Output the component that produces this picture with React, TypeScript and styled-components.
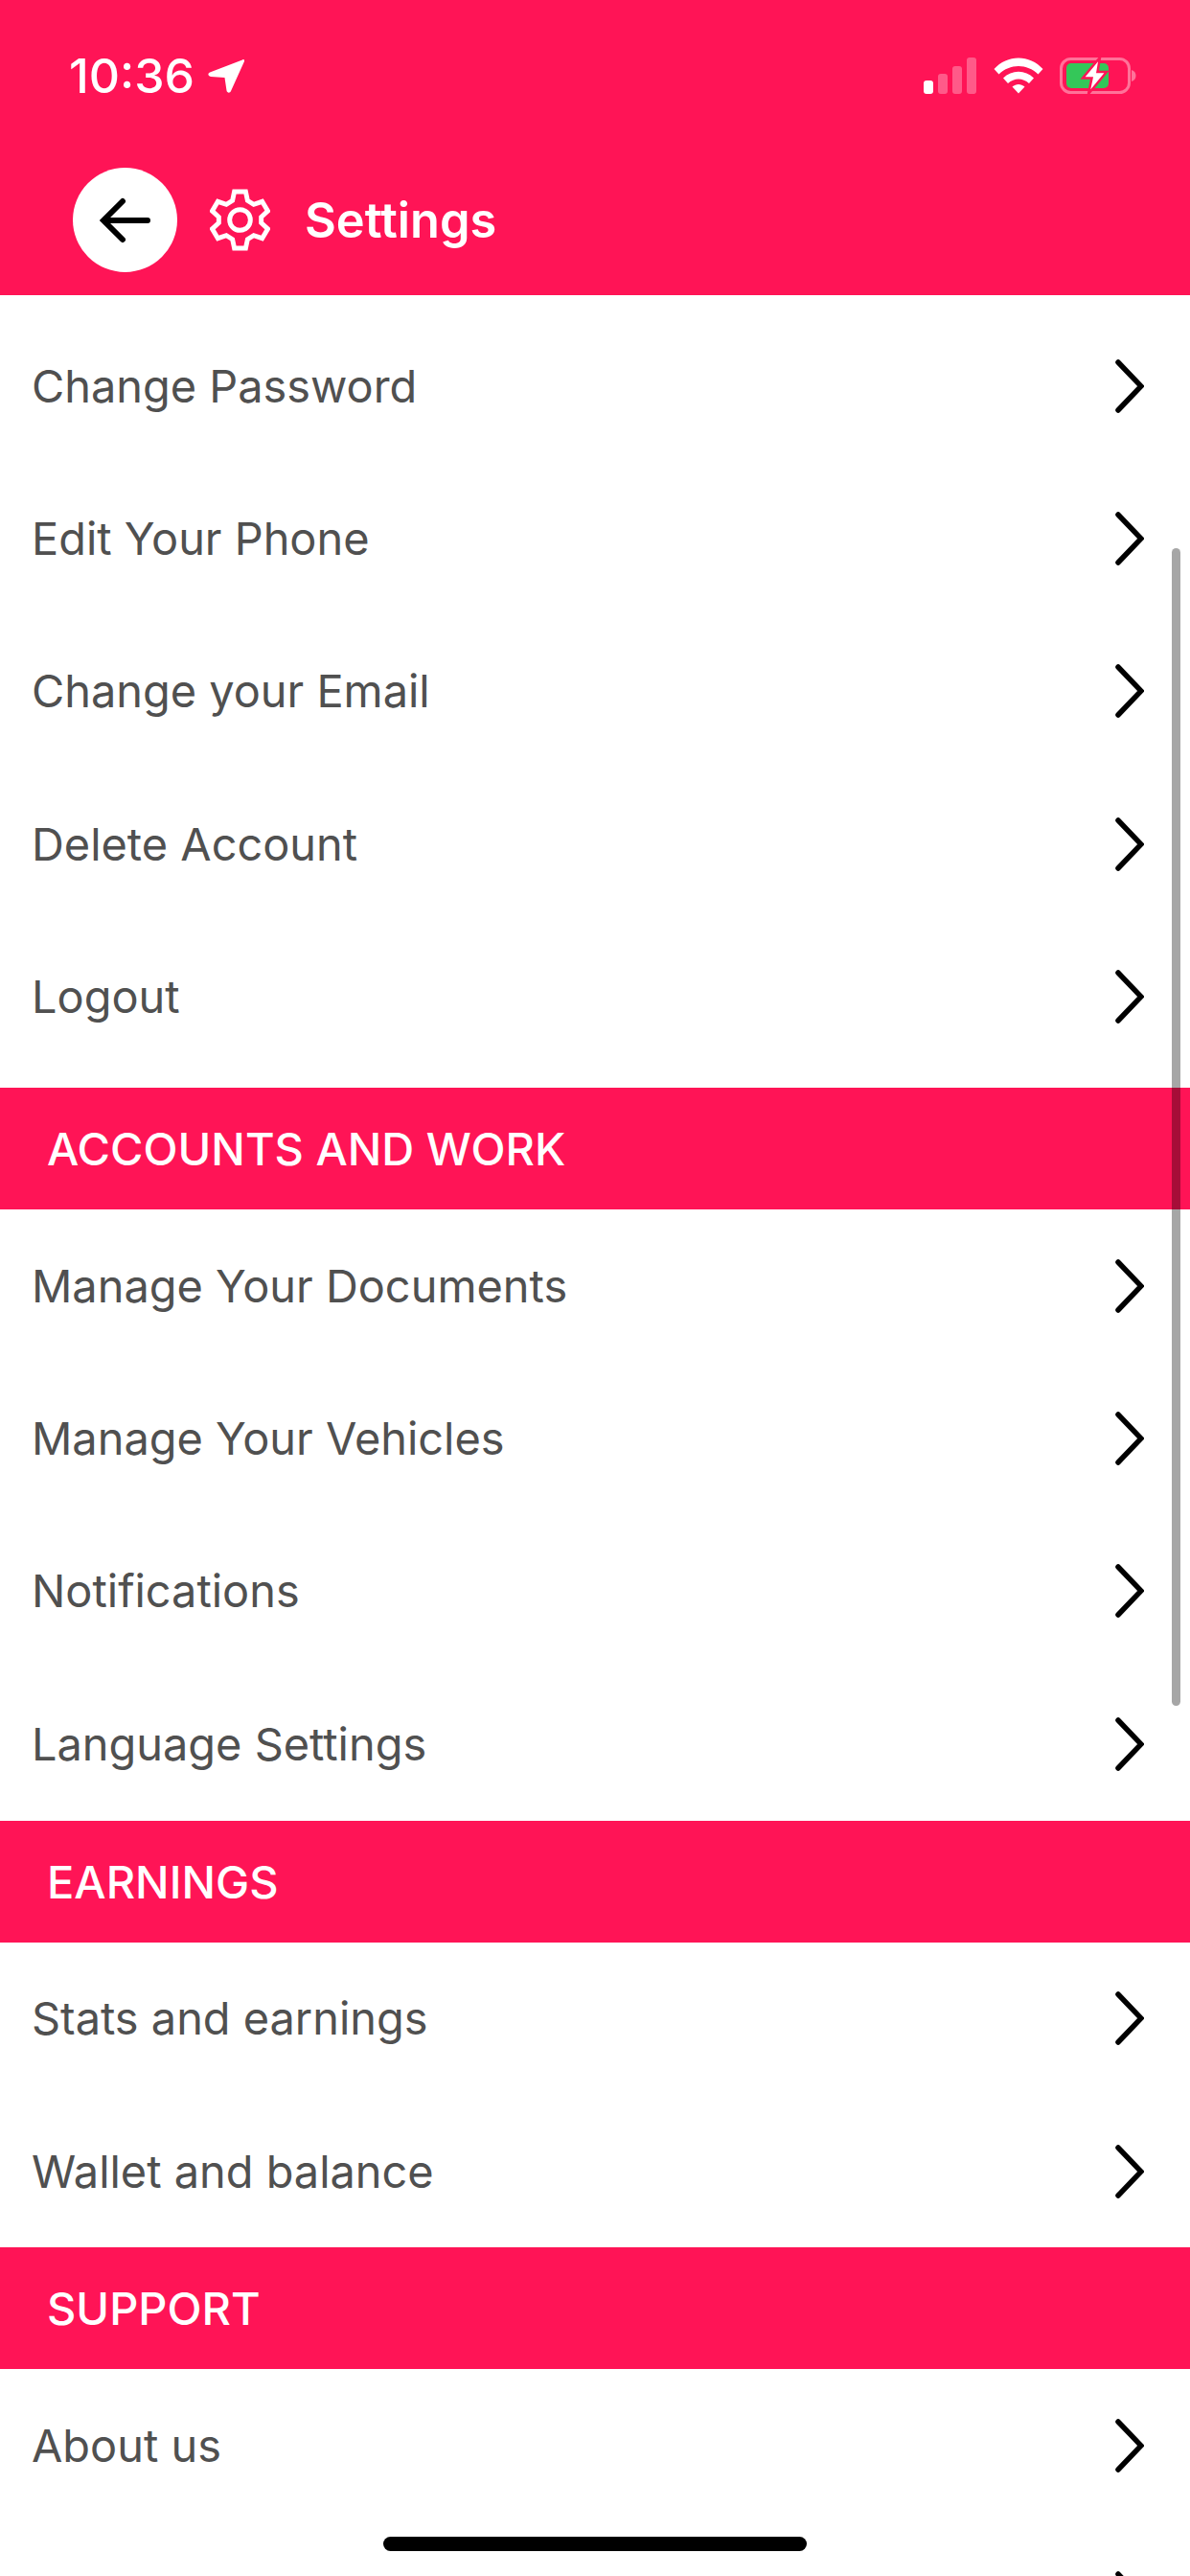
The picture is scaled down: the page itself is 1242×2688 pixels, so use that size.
import React from "react";
import styled, { createGlobalStyle } from "styled-components";

const BRAND = "#ff1456";

interface ISection {
  title?: string;
  items: string[];
}

// the last row is cut off by the bottom of the screen, only its chevron shows
const sections: ISection[] = [
  { items: ["Change Password", "Edit Your Phone", "Change your Email", "Delete Account", "Logout"] },
  { title: "ACCOUNTS AND WORK", items: ["Manage Your Documents", "Manage Your Vehicles", "Notifications", "Language Settings"] },
  { title: "EARNINGS", items: ["Stats and earnings", "Wallet and balance"] },
  { title: "SUPPORT", items: ["About us", ""] },
];

function Chevron() {
  return (
    <ChevronSvg viewBox="0 0 30 56" fill="none" stroke="#000" strokeWidth="5.5" strokeLinecap="round" strokeLinejoin="miter">
      <path d="M3 3 L27 28 L3 53" />
    </ChevronSvg>
  );
}

function StatusIcons() {
  return (
    <StatusRight>
      <svg width="56" height="38" viewBox="0 0 56 38">
        <rect x="0" y="24" width="10" height="14" rx="3" fill="#fff" />
        <rect x="15" y="17" width="10" height="21" rx="3" fill="#fff" opacity="0.3" />
        <rect x="30" y="9" width="10" height="29" rx="3" fill="#fff" opacity="0.3" />
        <rect x="45" y="0" width="10" height="38" rx="3" fill="#fff" opacity="0.3" />
      </svg>
      <svg width="52" height="38" viewBox="0 0 52 38">
        <path d="M0.5 12 C14 -3.5 38 -3.5 51.5 12 L46.5 17.5 C35 6 17 6 5.5 17.5 Z" fill="#fff" />
        <path d="M10 21.5 C19 12.5 33 12.5 42 21.5 L37 27 C30.5 21 21.5 21 15 27 Z" fill="#fff" />
        <path d="M19.5 30.5 C23.5 27 28.5 27 32.5 30.5 L26 37.5 Z" fill="#fff" />
      </svg>
      <svg width="80" height="40" viewBox="0 0 80 40">
        <rect x="1.5" y="2.5" width="71" height="35" rx="10" fill="none" stroke="#fff" strokeOpacity="0.4" strokeWidth="3" />
        <path d="M75 14 C78 15 79.5 17 79.5 20 C79.5 23 78 25 75 26 Z" fill="#fff" opacity="0.4" />
        <rect x="7" y="7" width="44" height="26" rx="5" fill="#34c759" />
        <path d="M42 1 L24 22.5 L33.5 22.5 L30 39 L49 16 L39.5 16 Z" fill="#fff" stroke={BRAND} strokeWidth="2.5" />
      </svg>
    </StatusRight>
  );
}

function App() {
  return (
    <Screen>
      <GlobalStyle />
      <Header>
        <StatusBar>
          <Clock>
            <Time>10:36</Time>
            <svg width="38" height="38" viewBox="0 0 38 38">
              <path d="M36 2.5 C37.5 1.5 38.5 2.5 38 4 L24 35 C23 37.5 20 37 19.5 34.5 L17.5 21 L3 20 C0 19.5 -0.5 16.5 2 15.5 Z" fill="#fff" />
            </svg>
          </Clock>
          <StatusIcons />
        </StatusBar>
        <TitleBar>
          <BackButton>
            <svg width="54" height="48" viewBox="0 0 54 48" fill="none" stroke="#000" strokeWidth="6" strokeLinecap="round" strokeLinejoin="miter">
              <path d="M50 24 H5 M24 4 L4 24 L24 44" />
            </svg>
          </BackButton>
          <GearIcon viewBox="0 0 64 66" fill="none" stroke="#fff" strokeWidth="5" strokeLinejoin="miter">
            <path d="M26 3 H38 L40 12.5 L46.5 16.5 L55.5 13.5 L61.5 23.5 L54.5 30 V36 L61.5 42.5 L55.5 52.5 L46.5 49.5 L40 53.5 L38 63 H26 L24 53.5 L17.5 49.5 L8.5 52.5 L2.5 42.5 L9.5 36 V30 L2.5 23.5 L8.5 13.5 L17.5 16.5 L24 12.5 Z" />
            <circle cx="32" cy="33" r="11" />
          </GearIcon>
          <Title>Settings</Title>
        </TitleBar>
      </Header>
      {sections.map((section, index) => (
        <section key={index}>
          {section.title && <SectionTitle>{section.title}</SectionTitle>}
          <List $padded={!section.title}>
            {section.items.map((item, i) => (
              <Row key={i}>
                <RowLabel>{item}</RowLabel>
                <Chevron />
              </Row>
            ))}
          </List>
        </section>
      ))}
      <ScrollThumb />
      <HomeIndicator />
    </Screen>
  );
}

const GlobalStyle = createGlobalStyle`
  html, body {
    margin: 0;
    padding: 0;
    background: #fff;
  }
`;

const Screen = styled.div`
  position: relative;
  width: 1242px;
  height: 2688px;
  overflow: hidden;
  background: #fff;
  font-family: Inter, "Liberation Sans", sans-serif;
`;

const Header = styled.header`
  height: 308px;
  background: ${BRAND};
  display: flex;
  flex-direction: column;
`;

const StatusBar = styled.div`
  display: flex;
  justify-content: space-between;
  align-items: center;
  height: 38px;
  margin-top: 60px;
  padding: 0 56px 0 72px;
`;

const Clock = styled.div`
  display: flex;
  align-items: center;
  gap: 14px;
`;

const Time = styled.span`
  color: #fff;
  font-size: 50px;
  font-weight: 500;
  line-height: 38px;
`;

const StatusRight = styled.div`
  display: flex;
  align-items: center;
  gap: 17px;
`;

const TitleBar = styled.div`
  display: flex;
  align-items: center;
  margin-top: 77px;
  padding-left: 76px;
`;

const BackButton = styled.div`
  width: 109px;
  height: 109px;
  border-radius: 50%;
  background: #fff;
  display: flex;
  align-items: center;
  justify-content: center;
  margin-right: 34px;
`;

const GearIcon = styled.svg`
  width: 63px;
  height: 65px;
  margin-right: 36px;
`;

const Title = styled.h1`
  margin: 0;
  color: #fff;
  font-size: 50.5px;
  font-weight: 600;
  line-height: 60px;
`;

const SectionTitle = styled.h2`
  margin: 0;
  height: 127px;
  padding-left: 49px;
  display: flex;
  align-items: center;
  background: ${BRAND};
  color: #fff;
  font-size: 47px;
  font-weight: 500;
`;

const List = styled.div<{ $padded: boolean }>`
  padding: ${props => (props.$padded ? "15px 0" : "0")};
`;

const Row = styled.div`
  height: 159.4px;
  padding: 0 48px 0 33px;
  display: flex;
  align-items: center;
  justify-content: space-between;
`;

const RowLabel = styled.span`
  color: #505050;
  font-size: 46.9px;
  font-weight: 400;
`;

const ChevronSvg = styled.svg`
  width: 30px;
  height: 56px;
  flex-shrink: 0;
`;

const ScrollThumb = styled.div`
  position: absolute;
  top: 572px;
  left: 1223px;
  width: 9px;
  height: 1208px;
  border-radius: 5px;
  background: rgba(0, 0, 0, 0.35);
`;

const HomeIndicator = styled.div`
  position: absolute;
  top: 2647px;
  left: 400px;
  width: 442px;
  height: 15px;
  border-radius: 8px;
  background: #000;
`;

export default App;
